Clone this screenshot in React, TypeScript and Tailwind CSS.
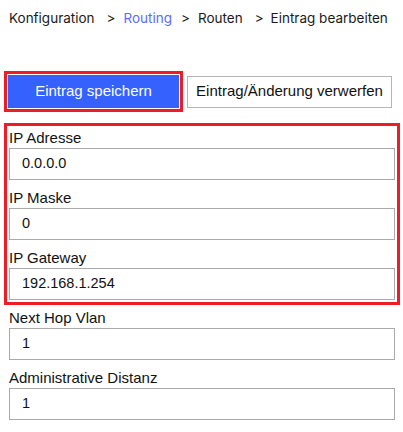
import React from "react";

const fields1 = [
  { label: "IP Adresse", value: "0.0.0.0" },
  { label: "IP Maske", value: "0" },
  { label: "IP Gateway", value: "192.168.1.254" },
];
const fields2 = [
  { label: "Next Hop Vlan", value: "1" },
  { label: "Administrative Distanz", value: "1" },
];

function Field({ label, value, last }: { label: string; value: string; last?: boolean }) {
  return (
    <div className={last ? "flex flex-col" : "flex flex-col mb-[8px]"}>
      <div className="h-[20px] leading-[20px] text-[15px] text-[#111]">{label}</div>
      <div className="h-[32px] border border-[#aaaaaa] bg-white flex items-center pl-[12px] text-[14.5px] text-[#111]">
        {value}
      </div>
    </div>
  );
}

export default function App() {
  return (
    <div
      className="w-[403px] h-[432px] bg-white overflow-hidden"
      style={{ fontFamily: "'Liberation Sans', Arial, sans-serif" }}
    >
      <div
        className="h-[36px] flex items-center pl-[9px] text-[13.5px] text-[#1a1a1a] whitespace-pre"
        style={{ fontFamily: "Inter, 'Liberation Sans', sans-serif" }}
      >
        <span>Konfiguration</span>
        <span className="ml-[12px]">&gt;</span>
        <span className="ml-[8px] text-[#5c6cff]">Routing</span>
        <span className="ml-[9px]">&gt;</span>
        <span className="ml-[8px]">Routen</span>
        <span className="ml-[12px]">&gt;</span>
        <span className="ml-[7px]">Eintrag bearbeiten</span>
      </div>
      <div className="flex items-center mt-[39px] pl-[8px] gap-[8px]">
        <div className="outline-[3px] outline outline-[#ee1c25] outline-offset-[1px]">
          <button className="w-[171px] h-[33px] bg-[#3562ff] text-white text-[15px] flex items-center justify-center">
            Eintrag speichern
          </button>
        </div>
        <button className="w-[205px] h-[32px] border border-[#b5b5b5] bg-white text-[15px] text-[#111] flex items-center justify-center">
          Eintrag/Änderung verwerfen
        </button>
      </div>
      <div className="ml-[9px] mr-[8px] mt-[20px]">
        <div className="outline-[3px] outline outline-[#ee1c25] outline-offset-[2px] mb-[8px]">
          {fields1.map((f, i) => (
            <Field key={f.label} label={f.label} value={f.value} last={i === fields1.length - 1} />
          ))}
        </div>
        {fields2.map((f) => (
          <Field key={f.label} label={f.label} value={f.value} />
        ))}
      </div>
    </div>
  );
}
